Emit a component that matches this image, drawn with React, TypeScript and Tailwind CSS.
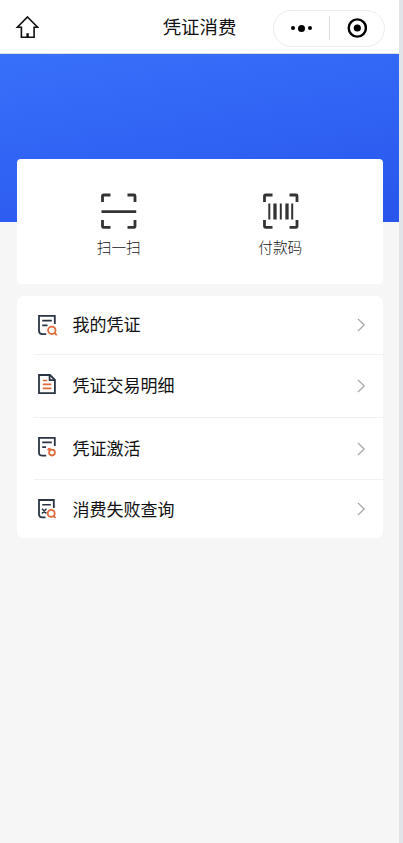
import type { ReactNode } from 'react';

const NAVY = '#2a3443';
const ORANGE = '#e0693a';

function HomeIcon() {
  return (
    <svg width="24" height="24" viewBox="0 0 24 24" fill="none" stroke="#111" strokeWidth="1.6" strokeLinejoin="miter">
      <path d="M12.5 2 L22.6 12.3 H19.1 V22.3 H6.4 V12.3 H2.4 Z" />
      <path d="M12.6 22 V18.2" strokeWidth="2.4" />
    </svg>
  );
}

function Corners() {
  return <path d="M1.5 9 V3 Q1.5 2 2.5 2 H9.5 M26.5 2 H33 Q34 2 34 3 V9 M34 27 V33 Q34 34.4 33 34.4 H26.5 M9.5 34.4 H2.5 Q1.5 34.4 1.5 33 V27" strokeWidth="2.8" />;
}

function ScanIcon() {
  return (
    <svg className="ml-px" width="36" height="36" viewBox="0 0 36 36" fill="none" stroke="#333">
      <Corners />
      <path d="M0.5 18.6 H35.2" strokeWidth="2.6" />
    </svg>
  );
}

function BarcodeIcon() {
  return (
    <svg className="ml-px" width="36" height="36" viewBox="0 0 36 36" fill="none" stroke="#333">
      <Corners />
      <path d="M6.3 10.4 V26.4 M17.8 10.4 V26.4 M29.2 10.4 V26.4" strokeWidth="2" />
      <path d="M12 10.4 V26.4 M24 10.4 V26.4" strokeWidth="3.3" />
    </svg>
  );
}

function Glyph({ children }: { children: ReactNode }) {
  return (
    <svg width="22" height="22" viewBox="0 0 22 22" fill="none" stroke={NAVY} strokeWidth="1.8">
      {children}
    </svg>
  );
}

const voucherIcon = (
  <Glyph>
    <path d="M17.8 10 V1.9 H2 V17 Q2.2 20.1 5.5 20.1 H9.2" />
    <path d="M5.2 6.6 H14.8 M5.2 11.4 H10.5" />
    <g stroke={ORANGE}>
      <circle cx="14.8" cy="16.3" r="3.7" />
      <path d="M17.3 18.8 L19.8 21.1" />
    </g>
  </Glyph>
);

const detailIcon = (
  <Glyph>
    <path d="M2 2 H13 L17.9 6.9 V20.2 H2 Z" />
    <path d="M12.6 2 V7.1 H17.9" />
    <path d="M5.8 7.5 H10.2 M5.8 11.4 H14.4 M5.8 15.4 H14.4" stroke={ORANGE} strokeWidth="1.6" />
  </Glyph>
);

const activateIcon = (
  <Glyph>
    <path d="M17.8 10 V1.9 H2 V17 Q2.2 19.7 5.5 19.7 H9.2" />
    <path d="M5.2 6.4 H14.8 M5.2 11.2 H9" />
    <g stroke={ORANGE}>
      <circle cx="15" cy="16.6" r="2.9" />
      <path d="M13.4 14.4 L11.4 12.4 M10.5 13.9 L13.6 12.6" strokeWidth="1.6" />
    </g>
  </Glyph>
);

const failedIcon = (
  <Glyph>
    <path d="M16.8 10 V2 H2 V16.5 Q2.2 19.3 5 19.3 H8.5" />
    <path d="M5.2 6.8 H13.8 M5 10.8 L9.4 15.5 M9.4 10.8 L5 15.5" strokeWidth="1.6" />
    <g stroke={ORANGE}>
      <circle cx="14.2" cy="15.3" r="3.5" />
      <path d="M16.4 17.8 L18.5 19.8" />
    </g>
  </Glyph>
);

const rows = [
  { label: '我的凭证', icon: voucherIcon, size: 'h-[58px]', iconLift: '', textLift: 'pb-0.5' },
  { label: '凭证交易明细', icon: detailIcon, size: 'h-[63px]', iconLift: 'pb-[3px]', textLift: 'pb-px' },
  { label: '凭证激活', icon: activateIcon, size: 'h-[62px] pt-px', iconLift: 'pb-[3px]', textLift: 'pb-px' },
  { label: '消费失败查询', icon: failedIcon, size: 'h-[59px]', iconLift: '', textLift: '' },
];

export default function App() {
  return (
    <div className="flex h-[843px] w-full bg-[#e1e5e9] font-['Noto_Sans_CJK_SC',sans-serif]">
      <main className="mr-1 flex min-w-0 flex-1 flex-col bg-[#f6f6f6]">
        <header className="grid h-[54px] shrink-0 grid-cols-[1fr_auto_1fr] items-center border-b border-[#dededa] bg-white pr-3.5 pl-[15px]">
          <HomeIcon />
          <h1 className="mr-px pb-0.5 text-[18.4px] leading-6 text-[#111]">凭证消费</h1>
          <div className="mt-[3px] flex h-[37px] w-28 items-center justify-self-end rounded-full border border-[#ececec]">
            <div className="flex flex-1 items-center justify-center gap-[3px]">
              <i className="size-1 rounded-full bg-black" />
              <i className="size-[7px] rounded-full bg-black" />
              <i className="size-1 rounded-full bg-black" />
            </div>
            <div className="h-6 w-px bg-[#dcdcdc]" />
            <div className="flex flex-1 justify-center">
              <svg width="20" height="20" viewBox="0 0 20 20">
                <circle cx="10.3" cy="10" r="8.6" fill="none" stroke="#000" strokeWidth="2.4" />
                <circle cx="10.3" cy="10" r="3.6" />
              </svg>
            </div>
          </div>
        </header>

        <section className="h-[168px] shrink-0 bg-linear-[170deg] from-[#3870fa] to-[#2855ec] pt-[105px] pr-4 pl-[17px]">
          <div className="grid h-[125px] grid-cols-2 rounded bg-white pt-[34px] pr-[22px] pl-[21px]">
            <button className="flex flex-col items-center">
              <ScanIcon />
              <span className="mt-2 text-[14.7px] leading-5 font-light text-[#111]">扫一扫</span>
            </button>
            <button className="flex flex-col items-center">
              <BarcodeIcon />
              <span className="mt-2 text-[14.7px] leading-5 font-light text-[#111]">付款码</span>
            </button>
          </div>
        </section>

        <ul className="mt-[74px] mr-4 ml-[17px] rounded-md bg-white">
          {rows.map((row, i) => (
            <li key={row.label} className={row.size + ' relative flex items-center pr-[17px] pl-5'}>
              {i > 0 && <hr className="absolute top-0 right-0 left-[17px] border-[#f1f1f1]" />}
              <span className={row.iconLift}>{row.icon}</span>
              <span className={row.textLift + ' ml-[13.5px] flex-1 text-[17px] leading-6 text-[#111]'}>{row.label}</span>
              <svg width="10" height="14" viewBox="0 0 10 14" fill="none" stroke="#aaa" strokeWidth="1.3">
                <path d="M2 1 L8.2 7 L2 13" />
              </svg>
            </li>
          ))}
        </ul>
      </main>
    </div>
  );
}
